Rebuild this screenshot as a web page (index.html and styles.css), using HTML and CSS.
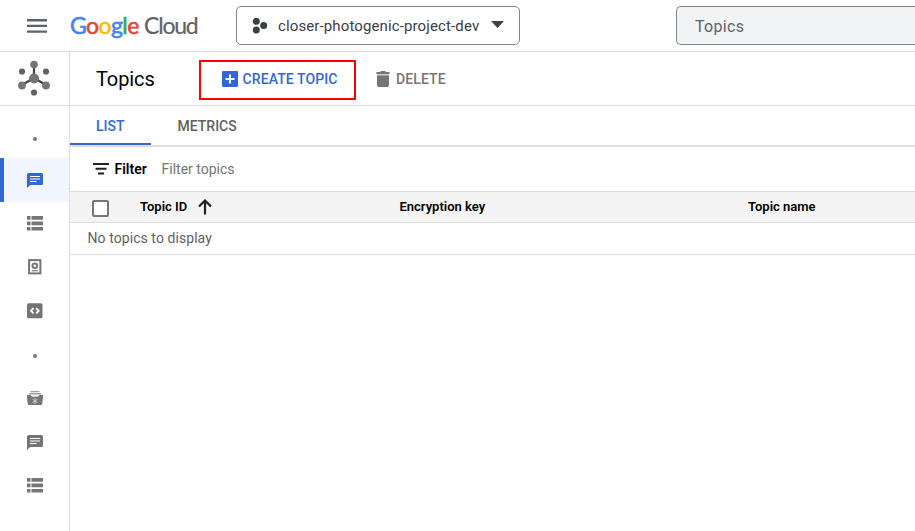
FILE: index.html
```html
<!DOCTYPE html>
<html lang="en">
<head>
<meta charset="utf-8">
<title>Topics</title>
<link rel="stylesheet" href="styles.css">
</head>
<body>
<svg class="defs" width="0" height="0">
  <symbol id="chat" viewBox="0 0 16 16"><path fill="currentColor" d="M1.5 1h13A1.5 1.5 0 0 1 16 2.5v9a1.5 1.5 0 0 1-1.5 1.5H3.300L0 16V2.500A1.500 1.500 0 0 1 1.500 1z"/><path class="cut" d="M3 4.500h10M3 7h10M3 9.500h6.500"/></symbol>
  <symbol id="rows" viewBox="0 0 16 15"><path fill="currentColor" d="M0 0h3.500v3.700H0zM4.500 0H16v3.700H4.500zM0 5.500h3.500V9.200H0zM4.500 5.500H16V9.200H4.500zM0 11h3.500v3.500H0zM4.500 11H16v3.500H4.500z"/></symbol>
</svg>
<header class="topbar">
  <svg class="menu" width="20" height="14" viewBox="0 0 20 14"><path fill="#5f6368" d="M0 0h20v2.400H0zM0 5.700h20v2.400H0zM0 11.400h20v2.400H0z"/></svg>
  <div class="logo"><span class="google"><span class="b">G</span><span class="r">o</span><span class="y">o</span><span class="b">g</span><span class="g">l</span><span class="r">e</span></span><span class="cloud">Cloud</span></div>
  <div class="project">
    <svg width="16" height="16" viewBox="0 0 16 16" fill="#3c4043"><circle cx="4.300" cy="3.300" r="3.500"/><circle cx="11.700" cy="7.600" r="3.500"/><circle cx="4.300" cy="12" r="3.500"/></svg>
    <span>closer-photogenic-project-dev</span>
    <svg class="caret" width="13" height="7" viewBox="0 0 13 7"><path fill="#3c4043" d="M0 0h13L6.500 7z"/></svg>
  </div>
  <div class="search">Topics</div>
</header>
<div class="titlebar">
  <div class="product">
    <svg width="34" height="36" viewBox="0 0 34 36"><path stroke="#424242" stroke-width="2.200" d="M17 5v13M17 18L5 25M17 18l12 7"/><g fill="#757575"><circle cx="17" cy="4.500" r="3.800"/><circle cx="17" cy="18.500" r="5"/><circle cx="5" cy="25.500" r="3.900"/><circle cx="29" cy="25.500" r="3.900"/></g><g fill="#616161"><circle cx="5" cy="11.500" r="3.100"/><circle cx="29" cy="11.500" r="3.100"/><circle cx="17" cy="32.500" r="3.100"/></g></svg>
  </div>
  <h1>Topics</h1>
  <div class="create">
    <svg width="16" height="16" viewBox="0 0 16 16"><rect width="16" height="16" rx="1" fill="#3367d6"/><path stroke="#fff" stroke-width="2" d="M8 3.500v9M3.500 8h9"/></svg>
    <span>CREATE TOPIC</span>
  </div>
  <div class="delete">
    <svg width="14" height="16" viewBox="0 0 14 16"><path fill="#757575" d="M1 4.500h12V14a2 2 0 0 1-2 2H3a2 2 0 0 1-2-2z"/><path fill="#9e9e9e" d="M1 3.500h12v1.500H1z"/><path fill="#757575" d="M.500 1H4l1-1h4l1 1h3.500v2H.500z"/></svg>
    <span>DELETE</span>
  </div>
</div>
<div class="body">
  <nav>
    <div class="item first"><i></i></div>
    <div class="item active"><svg width="16" height="16"><use href="#chat"/></svg></div>
    <div class="item short"><svg width="16" height="15"><use href="#rows"/></svg></div>
    <div class="item"><svg width="14" height="16" viewBox="0 0 14 16"><rect x="1.100" y="1.100" width="11.300" height="13.300" fill="none" stroke="#757575" stroke-width="2"/><circle cx="6.800" cy="6.700" r="2.300" fill="none" stroke="#757575" stroke-width="2"/><path stroke="#757575" stroke-width="1.200" d="M3.800 11.700h6"/></svg></div>
    <div class="item"><svg width="16" height="16" viewBox="0 0 16 16"><rect y=".3" width="15.500" height="15" rx="1.500" fill="#757575"/><path fill="none" stroke="#fff" stroke-width="1.800" d="M6.500 5.200L4 7.800l2.500 2.600M9.200 5.200l2.500 2.600-2.500 2.600"/></svg></div>
    <div class="item short divider"><i></i></div>
    <div class="item"><svg width="16" height="15" viewBox="0 0 16 15"><path fill="#9e9e9e" d="M3.500 0h9v1.300h-9zM2 2h12v1.500H2z"/><path fill="#757575" d="M0 4h16v3l-.8 6a1.200 1.200 0 0 1-1.200 1H2a1.200 1.200 0 0 1-1.200-1L0 7z"/><path fill="#eee" d="M3.500 4h9l-1.500 1.800H5z"/><path stroke="#ccc" fill="none" d="M8 7v6M5.500 8.300l5 3.200M10.500 8.300l-5 3.200"/></svg></div>
    <div class="item"><svg width="16" height="16"><use href="#chat"/></svg></div>
    <div class="item short"><svg width="16" height="15"><use href="#rows"/></svg></div>
  </nav>
  <main>
    <div class="tabs"><div class="tab on">LIST</div><div class="tab">METRICS</div></div>
    <div class="filter">
      <svg width="16" height="12" viewBox="0 0 16 12"><path fill="#212121" d="M0 0h16v2H0zM2.500 4.700h11v2h-11zM5 9.500h6v2H5z"/></svg>
      <b>Filter</b><span>Filter topics</span>
    </div>
    <div class="row head">
      <div class="check"></div>
      <div class="col id"><span>Topic ID</span><svg width="14" height="16" viewBox="0 0 14 16"><path fill="none" stroke="#212121" stroke-width="2.200" d="M7 15.500V2M1 7.500l6-6 6 6"/></svg></div>
      <div class="col key"><span>Encryption key</span></div>
      <div class="col"><span>Topic name</span></div>
    </div>
    <div class="row empty">No topics to display</div>
  </main>
</div>
</body>
</html>
```

FILE: styles.css
```css
* { box-sizing: border-box; }
body { margin: 0; height: 531px; overflow: hidden; background: #fff; font-family: Roboto, sans-serif; font-size: 14px; color: #000; display: flex; flex-direction: column; }
svg { display: block; flex: none; }
.defs { position: absolute; }
.cut { stroke: #fff; stroke-width: 1.2; }

.topbar { height: 52px; flex: none; display: flex; align-items: center; border-bottom: 1px solid #dadada; padding-left: 27px; }
.menu { margin-top: 1px; }
.logo { display: flex; width: 165px; margin-left: 23px; padding-bottom: 2px; font: 23px/30px Lato, sans-serif; }
.google { width: 74px; letter-spacing: -0.6px; -webkit-text-stroke: 0.6px; }
.cloud { color: #5f6368; letter-spacing: -1.2px; -webkit-text-stroke: 0.2px; }
.b { color: #4285f4; }
.r { color: #ea4335; }
.y { color: #fbbc04; }
.g { color: #34a853; }
.project { width: 284px; height: 39px; flex: none; margin-left: 1px; padding-left: 15px; border: 1px solid #80868b; border-radius: 5px; display: flex; align-items: center; font-size: 15px; color: #3c4043; letter-spacing: 0.12px; }
.project span { width: 213px; margin-left: 10px; white-space: nowrap; }
.caret { margin-bottom: 2px; }
.search { flex: 1; height: 39px; margin-left: 156px; padding-left: 18px; border: 1px solid #80868b; border-right: 0; border-radius: 5px 0 0 5px; background: #f1f3f4; color: #5f6368; font-size: 16px; line-height: 39px; letter-spacing: 0.3px; }

.titlebar { height: 54px; flex: none; display: flex; align-items: center; border-bottom: 1px solid #dedede; }
.product { width: 70px; height: 53px; flex: none; padding: 0 1px 1px 0; border-right: 1px solid #dedede; display: flex; align-items: center; justify-content: center; }
h1 { width: 103px; margin: 0 0 0 26px; font-size: 20px; font-weight: 400; line-height: 26px; letter-spacing: -0.1px; }
.create { width: 157px; height: 40px; margin-top: 3px; padding: 0 0 2px 21px; border: 2px solid #f00; display: flex; align-items: center; color: #3367d6; font-weight: 500; letter-spacing: 0.1px; }
.create span { margin-left: 4.5px; }
.delete { display: flex; align-items: center; margin-left: 20px; color: #757575; font-weight: 500; letter-spacing: 0.1px; }
.delete span { margin-left: 6px; }

.body { flex: 1; display: flex; min-height: 0; }
nav { width: 70px; flex: none; border-right: 1px solid #dedede; color: #757575; }
.item { height: 44px; display: flex; align-items: center; justify-content: center; }
.item.short { height: 43px; }
.item.first { height: 52px; padding-top: 13px; }
.item.divider { padding-top: 3px; }
.item i { width: 4px; height: 4px; border-radius: 50%; background: #757575; }
.item.active { background: #f0f5ff; border-left: 4px solid #3367d6; padding-right: 4px; color: #3367d6; }

main { flex: 1; min-width: 0; }
.tabs { height: 41px; display: flex; border-bottom: 2px solid #dedede; font-weight: 500; line-height: 40px; color: #616161; }
.tab { height: 40px; padding: 0 26.500px; }
.tab.on { width: 81px; height: 39px; padding-left: 26px; color: #3367d6; border-bottom: 2px solid #3367d6; }
.filter { height: 44px; display: flex; align-items: center; padding-left: 23px; }
.filter b { width: 47px; margin-left: 5.5px; font-weight: 600; }
.filter span { color: #757575; }
.row { display: flex; align-items: center; height: 32px; border-bottom: 1px solid #dedede; }
.head { background: #f4f4f4; border-top: 1px solid #dedede; font-size: 13px; font-weight: 600; }
.head span { padding-bottom: 2px; }
.check { width: 17px; height: 17px; margin: 2px 31px 0 22px; border: 2px solid #757575; border-radius: 2px; background: #fff; }
.col { display: flex; align-items: center; }
.id { width: 259.5px; }
.id svg { margin-left: 11px; }
.key { width: 348.5px; }
.empty { padding: 0 0 2px 17.5px; color: #616161; letter-spacing: 0.07px; }
```
